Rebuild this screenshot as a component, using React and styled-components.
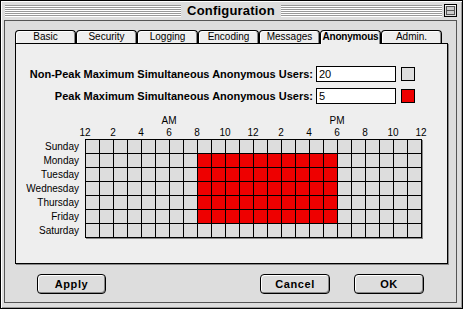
import React from 'react';
import styled, { createGlobalStyle } from 'styled-components';

const GlobalStyle = createGlobalStyle`
  html, body {
    margin: 0;
    padding: 0;
    background: #fff;
  }
  body {
    font-family: "Liberation Sans", Arial, sans-serif;
    color: #000;
  }
`

const Window = styled.div`
  width: 463px;
  height: 309px;
  box-sizing: border-box;
  border: 1px solid #000;
  background: #dddddd;
  box-shadow: inset 1px 1px 0 #fff, inset -1px -1px 0 #999;
  padding: 0 5px 5px 3px;
  display: flex;
  flex-direction: column;
`
const TitleBar = styled.div`
  height: 19px;
  display: grid;
  grid-template-columns: 1fr auto 1fr;
  align-items: center;
  column-gap: 3px;
  padding-left: 1px;
`
const Stripes = styled.div`
  height: 12px;
  flex: 1;
  background: repeating-linear-gradient(to bottom, #999 0 1px, #fff 1px 2px);
`
const TitleRight = styled.div`
  display: flex;
  align-items: center;
  gap: 2px;
`
const Title = styled.div`
  font-weight: bold;
  font-size: 13px;
  line-height: 19px;
  padding: 0 3px;
  letter-spacing: 0.2px;
`
const Content = styled.div`
  flex: 1;
  border: 1px solid #555;
  padding: 9px 8px 8px 10px;
  display: flex;
  flex-direction: column;
`
const TabRow = styled.div`
  display: flex;
  height: 13px;
  align-items: flex-start;
`
const Tab = styled.div`
  position: relative;
  z-index: ${p => (p.$active ? 1 : 0)};
  box-sizing: border-box;
  width: 61px;
  height: ${p => (p.$active ? '14px' : '13px')};
  border: 1px solid #000;
  border-bottom: none;
  border-radius: 4px 4px 0 0;
  background: #eeeeee;
  box-shadow: inset 1px 1px 0 #fff, inset -1px 0 0 #888;
  font-size: 10px;
  line-height: 12px;
  text-align: center;
  font-weight: ${p => (p.$active ? 'bold' : 'normal')};
  letter-spacing: ${p => (p.$active ? '-0.2px' : '0')};
  white-space: nowrap;
  overflow: hidden;
`
const Panel = styled.div`
  box-sizing: border-box;
  height: 221px;
  border: 1px solid #000;
  background: #eeeeee;
  box-shadow: 1px 1px 0 #888;
  padding-top: 22px;
`
const Form = styled.div`
  display: grid;
  grid-template-columns: 297px 80px 16px;
  grid-auto-rows: 16px;
  column-gap: 3px;
  row-gap: 6px;
  align-items: center;
`
const Label = styled.div`
  text-align: right;
  font-weight: bold;
  font-size: 11px;
  white-space: nowrap;
`
const Field = styled.input`
  box-sizing: border-box;
  width: 80px;
  height: 16px;
  margin: 0;
  border: 1px solid #000;
  background: #fff;
  padding: 0 2px;
  font-family: "Liberation Sans", Arial, sans-serif;
  font-size: 11px;
  outline: none;
`
const Swatch = styled.div`
  box-sizing: border-box;
  width: 14px;
  height: 14px;
  margin-left: 2px;
  border: 1px solid #000;
  background: ${p => p.$color};
`
const Schedule = styled.div`
  margin-top: 11px;
  font-size: 10px;
`
const HalfRow = styled.div`
  margin-left: 69px;
  display: grid;
  grid-template-columns: repeat(24, 14px);
  height: 12px;
  line-height: 12px;
`
const Half = styled.span`
  grid-column: ${p => p.$col} / span 2;
  text-align: center;
`
const HourRow = styled.div`
  margin-left: 55px;
  display: flex;
  height: 12px;
  line-height: 12px;
`
const Hour = styled.span`
  width: 28px;
  text-align: center;
`
const Body = styled.div`
  display: flex;
  column-gap: 6px;
`
const DayCol = styled.div`
  width: 63px;
  padding-top: 1px;
`
const Day = styled.div`
  height: 14px;
  line-height: 14px;
  text-align: right;
  white-space: nowrap;
`
const CellGrid = styled.div`
  display: grid;
  grid-template-columns: repeat(24, 13px);
  grid-auto-rows: 13px;
  gap: 1px;
  border: 1px solid #000;
  background: #000;
  box-shadow: 1px 1px 0 #888;
`
const Cell = styled.div`
  background: ${p => (p.$on ? '#ee0000' : '#dddddd')};
`
const ButtonRow = styled.div`
  margin-top: 10px;
  display: flex;
  justify-content: space-between;
  padding: 0 24px 0 22px;
`
const ButtonGroup = styled.div`
  display: flex;
  gap: 24px;
`
const Button = styled.button`
  box-sizing: border-box;
  width: ${p => p.$w || 70}px;
  height: 20px;
  margin: 0;
  padding: 0;
  border: 1px solid #000;
  border-radius: 4px;
  background: #dddddd;
  box-shadow: inset 1px 1px 0 #fff, inset -1px -1px 0 #888;
  font-family: "Liberation Sans", Arial, sans-serif;
  font-weight: bold;
  font-size: 11px;
  letter-spacing: 0.6px;
  color: #000;
`

const tabs = ['Basic', 'Security', 'Logging', 'Encoding', 'Messages', 'Anonymous', 'Admin.']
const days = ['Sunday', 'Monday', 'Tuesday', 'Wednesday', 'Thursday', 'Friday', 'Saturday']
const hours = [12, 2, 4, 6, 8, 10, 12, 2, 4, 6, 8, 10, 12]

function isPeak(day, hour) {
  return day >= 1 && day <= 5 && hour >= 8 && hour < 18
}

function CollapseBox() {
  return (
    <svg width="13" height="13" viewBox="0 0 13 13">
      <rect x="0.5" y="0.5" width="12" height="12" fill="#ddd" stroke="#000" />
      <rect x="1" y="1" width="11" height="1" fill="#fff" />
      <rect x="2.5" y="2.5" width="8" height="8" fill="#ccc" stroke="#555" />
      <line x1="2.5" y1="6.5" x2="10.5" y2="6.5" stroke="#555" />
    </svg>
  )
}

export default function App() {
  return (
    <>
      <GlobalStyle />
      <Window>
        <TitleBar>
          <Stripes />
          <Title>Configuration</Title>
          <TitleRight>
            <Stripes />
            <CollapseBox />
          </TitleRight>
        </TitleBar>
        <Content>
          <TabRow>
            {tabs.map(t => (
              <Tab key={t} $active={t === 'Anonymous'}>{t}</Tab>
            ))}
          </TabRow>
          <Panel>
            <Form>
              <Label>Non-Peak Maximum Simultaneous Anonymous Users:</Label>
              <Field defaultValue="20" />
              <Swatch $color="#dddddd" />
              <Label>Peak Maximum Simultaneous Anonymous Users:</Label>
              <Field defaultValue="5" />
              <Swatch $color="#ee0000" />
            </Form>
            <Schedule>
              <HalfRow>
                <Half $col={6}>AM</Half>
                <Half $col={18}>PM</Half>
              </HalfRow>
              <HourRow>
                {hours.map((h, i) => (
                  <Hour key={i}>{h}</Hour>
                ))}
              </HourRow>
              <Body>
                <DayCol>
                  {days.map(d => (
                    <Day key={d}>{d}</Day>
                  ))}
                </DayCol>
                <CellGrid>
                  {days.map((d, di) =>
                    Array.from({ length: 24 }, (_, h) => (
                      <Cell key={`${d}${h}`} $on={isPeak(di, h)} />
                    ))
                  )}
                </CellGrid>
              </Body>
            </Schedule>
          </Panel>
          <ButtonRow>
            <Button $w={69}>Apply</Button>
            <ButtonGroup>
              <Button>Cancel</Button>
              <Button>OK</Button>
            </ButtonGroup>
          </ButtonRow>
        </Content>
      </Window>
    </>
  )
}
